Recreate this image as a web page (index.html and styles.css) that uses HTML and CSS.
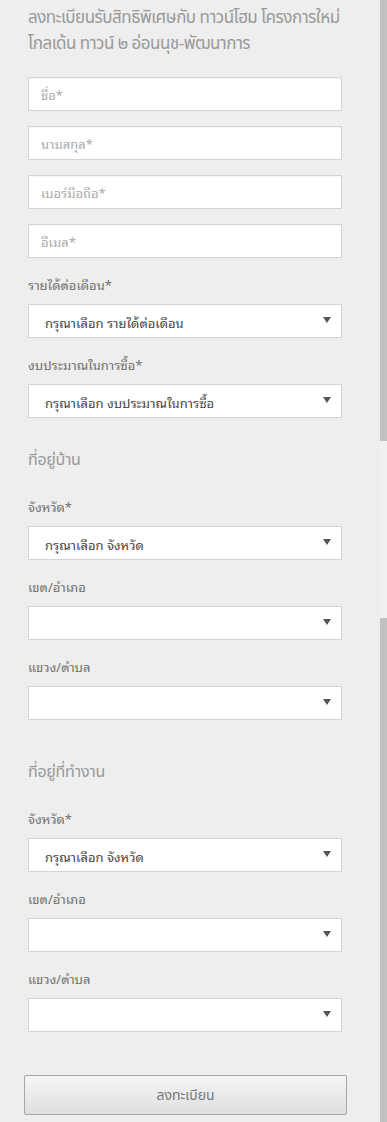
FILE: index.html
```html
<!DOCTYPE html>
<html lang="th">
<head>
  <meta charset="UTF-8">
  <title>ลงทะเบียน</title>
  <link rel="stylesheet" href="styles.css">
</head>
<body>

<div class="page">
  <form class="register">
    <h2 class="title">ลงทะเบียนรับสิทธิพิเศษกับ ทาวน์โฮม โครงการใหม่ โกลเด้น ทาวน์ ๒ อ่อนนุช-พัฒนาการ</h2>

    <input class="field" type="text" placeholder="ชื่อ*">
    <input class="field" type="text" placeholder="นามสกุล*">
    <input class="field" type="text" placeholder="เบอร์มือถือ*">
    <input class="field" type="text" placeholder="อีเมล*">

    <label class="label">รายได้ต่อเดือน*</label>
    <div class="select"><span>กรุณาเลือก รายได้ต่อเดือน</span><i class="arrow"></i></div>

    <label class="label">งบประมาณในการซื้อ*</label>
    <div class="select"><span>กรุณาเลือก งบประมาณในการซื้อ</span><i class="arrow"></i></div>

    <div class="address">
      <h3 class="section">ที่อยู่บ้าน</h3>
      <label class="label">จังหวัด*</label>
      <div class="select"><span>กรุณาเลือก จังหวัด</span><i class="arrow"></i></div>
      <label class="label">เขต/อำเภอ</label>
      <div class="select"><span></span><i class="arrow"></i></div>
      <label class="label">แขวง/ตำบล</label>
      <div class="select"><span></span><i class="arrow"></i></div>
    </div>

    <div class="address">
      <h3 class="section">ที่อยู่ที่ทำงาน</h3>
      <label class="label">จังหวัด*</label>
      <div class="select"><span>กรุณาเลือก จังหวัด</span><i class="arrow"></i></div>
      <label class="label">เขต/อำเภอ</label>
      <div class="select"><span></span><i class="arrow"></i></div>
      <label class="label">แขวง/ตำบล</label>
      <div class="select"><span></span><i class="arrow"></i></div>
    </div>

    <button class="submit" type="button">ลงทะเบียน</button>
  </form>

  <div class="scrollbar">
    <div class="thumb thumb-top"></div>
    <div class="track"></div>
    <div class="thumb thumb-bottom"></div>
  </div>
</div>

</body>
</html>
```

FILE: styles.css
```css
html, body {
  margin: 0;
  height: 1122px;
  overflow: hidden;
}
body {
  font-family: "Noto Sans Thai Looped", Tahoma, Garuda, Loma, "Noto Sans Thai", "Noto Sans", sans-serif;
  background: #eeeeee;
  color: #666;
}
.page {
  display: flex;
  height: 1122px;
}
.register {
  flex: 1;
  display: flex;
  flex-direction: column;
  padding: 0 0 0 28px;
  margin-right: 30px;
  border-right: 3px solid #efefef;
}
.title, .section, .submit {
  font-family: "Noto Sans Thai", "Noto Sans", sans-serif;
}
.title {
  margin: 5px 0 20px;
  font-size: 17px;
  line-height: 26px;
  font-weight: 400;
  letter-spacing: -0.5px;
  color: #999;
}
.field {
  box-sizing: border-box;
  width: 314px;
  height: 34px;
  margin: 0 0 15px;
  padding: 0 12px;
  border: 1px solid #d4d4d4;
  box-shadow: inset 0 1px 1px rgba(0, 0, 0, 0.04);
  background: #fff;
  font-family: inherit;
  font-size: 13px;
  outline: none;
}
.field::placeholder {
  color: #aaa;
}
.field:last-of-type {
  margin-bottom: 0;
}
.label {
  display: block;
  padding: 17px 0 9px;
  font-size: 13px;
  line-height: 20px;
  color: #707070;
}
.select {
  box-sizing: border-box;
  width: 314px;
  height: 34px;
  display: flex;
  align-items: center;
  justify-content: space-between;
  padding: 2px 10px 0 16px;
  border: 1px solid #d4d4d4;
  background: #fff;
  font-size: 13px;
  color: #444;
}
.arrow {
  width: 0;
  height: 0;
  border-left: 4px solid transparent;
  border-right: 4px solid transparent;
  border-top: 6px solid #555;
  margin-top: -4px;
}
.address {
  padding-bottom: 10px;
}
.section {
  margin: 30px 0 8px;
  font-size: 16px;
  line-height: 24px;
  font-weight: 400;
  letter-spacing: -0.3px;
  color: #999;
}
.submit {
  width: 323px;
  height: 40px;
  margin: 33px 0 0 -4px;
  border: 1px solid #a6a6a6;
  border-radius: 2px;
  background: linear-gradient(#f6f6f6, #dedede);
  font-size: 14px;
  color: #777;
}
.scrollbar {
  width: 12px;
  display: flex;
  flex-direction: column;
}
.thumb {
  background: #c1c1c1;
}
.thumb-top {
  height: 441px;
}
.track {
  height: 177px;
  background: #f1f1f1;
}
.thumb-bottom {
  flex: 1;
}
```
